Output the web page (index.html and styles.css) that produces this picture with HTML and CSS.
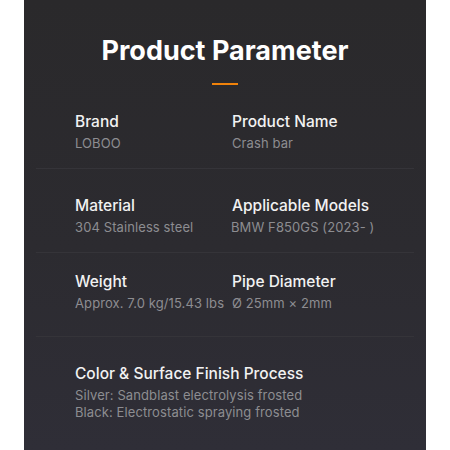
FILE: index.html
```html
<!DOCTYPE html>
<html lang="en">
<head>
<meta charset="utf-8">
<title>Product Parameter</title>
<link rel="stylesheet" href="styles.css">
</head>
<body>
<main class="panel">
  <h1 class="title">Product Parameter</h1>
  <div class="accent"></div>
  <section class="params">
    <div class="row">
      <div class="cell"><div class="label">Brand</div><div class="value">LOBOO</div></div>
      <div class="cell"><div class="label">Product Name</div><div class="value">Crash bar</div></div>
    </div>
    <div class="row">
      <div class="cell"><div class="label">Material</div><div class="value">304 Stainless steel</div></div>
      <div class="cell"><div class="label">Applicable Models</div><div class="value value-shift">BMW F850GS (2023- )</div></div>
    </div>
    <div class="row row-tight">
      <div class="cell"><div class="label">Weight</div><div class="value">Approx. 7.0 kg/15.43 lbs</div></div>
      <div class="cell"><div class="label">Pipe Diameter</div><div class="value">Ø 25mm × 2mm</div></div>
    </div>
    <div class="row row-last">
      <div class="cell cell-wide"><div class="label">Color &amp; Surface Finish Process</div><div class="value">Silver: Sandblast electrolysis frosted<br>Black: Electrostatic spraying frosted</div></div>
    </div>
  </section>
</main>
</body>
</html>
```
FILE: styles.css
```css
html, body {
  margin: 0;
  padding: 0;
  background: #ffffff;
}
body {
  font-family: Inter, "Open Sans", sans-serif;
}
.panel {
  margin: 0 24px;
  height: 450px;
  box-sizing: border-box;
  padding-top: 35px;
  background: linear-gradient(180deg, #2a292b 0%, #2c2b30 55%, #2f2e37 100%);
  overflow: hidden;
}
.title {
  margin: 0;
  text-align: center;
  font-size: 27px;
  line-height: 32px;
  font-weight: 700;
  color: #ffffff;
}
.accent {
  width: 26px;
  height: 2px;
  margin: 16px auto 0;
  background: #f0820a;
}
.params {
  margin: 0 12px;
}
.row {
  height: 84px;
  box-sizing: border-box;
  padding: 27px 0 0 39px;
  display: grid;
  grid-template-columns: 157px 1fr;
  border-bottom: 1px solid #353439;
}
.row-tight {
  padding-top: 19px;
}
.row-last {
  border-bottom: none;
}
.cell-wide {
  grid-column: 1 / -1;
}
.label {
  font-size: 15.5px;
  line-height: 20px;
  font-weight: 500;
  color: #f2f2f2;
}
.value {
  margin-top: 3px;
  font-size: 13px;
  line-height: 16.5px;
  color: #8d8d91;
  white-space: nowrap;
  letter-spacing: 0.1px;
}
.value-shift {
  margin-left: -1px;
}
```
